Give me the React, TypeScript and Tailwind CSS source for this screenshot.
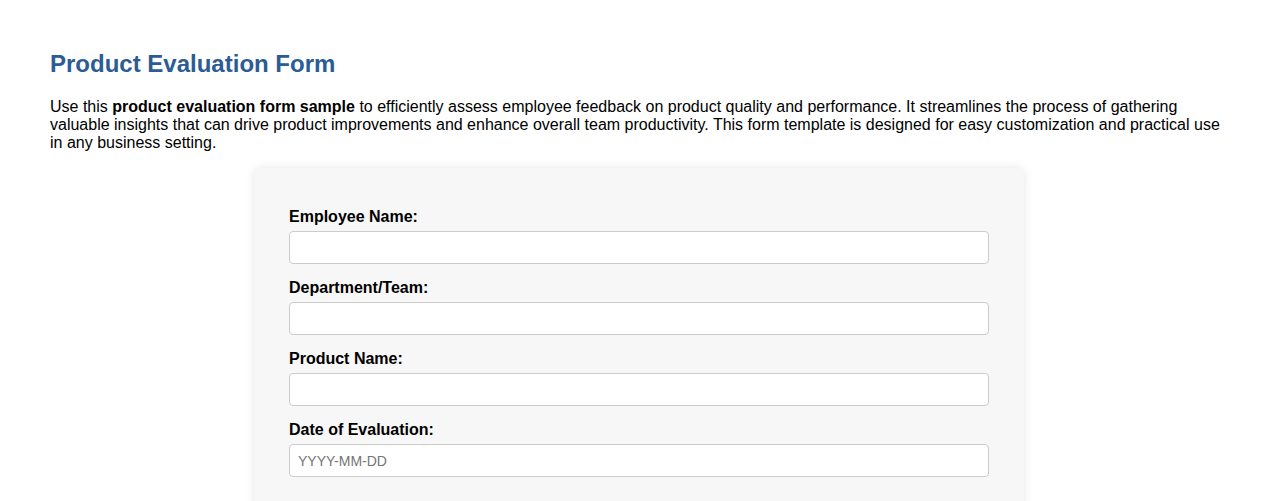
import React from 'react';

const fields = [
  { label: 'Employee Name:', placeholder: '' },
  { label: 'Department/Team:', placeholder: '' },
  { label: 'Product Name:', placeholder: '' },
  { label: 'Date of Evaluation:', placeholder: 'YYYY-MM-DD' },
];

export default function App() {
  return (
    <div className="min-h-screen bg-white px-[50px] pt-[50px] pb-10 text-black" style={{ fontFamily: '"Liberation Sans", Arial, sans-serif' }}>
      <h2 className="text-[24px] font-bold leading-[28px] text-[#2b5c94]">Product Evaluation Form</h2>
      <p className="mt-[20px] text-[16px] leading-[18px]">
        Use this <strong>product evaluation form sample</strong> to efficiently assess employee feedback on product quality and performance. It streamlines the process of gathering valuable insights that can drive product improvements and enhance overall team productivity. This form template is designed for easy customization and practical use in any business setting.
      </p>
      <form className="mx-auto mt-[16px] w-[770px] rounded-lg bg-[#f7f7f7] px-[35px] pt-[40px] pb-6 shadow-[0_0_10px_rgba(0,0,0,0.1)]">
        {fields.map((f) => (
          <div key={f.label} className="mb-[15px]">
            <label className="mb-[5px] block text-[16px] font-bold leading-[18px]">{f.label}</label>
            <input
              type="text"
              placeholder={f.placeholder}
              className="block h-[33px] w-full rounded border border-[#ccc] bg-white px-2 text-[14px] placeholder:text-[#757575] focus:outline-none"
            />
          </div>
        ))}
      </form>
    </div>
  );
}
